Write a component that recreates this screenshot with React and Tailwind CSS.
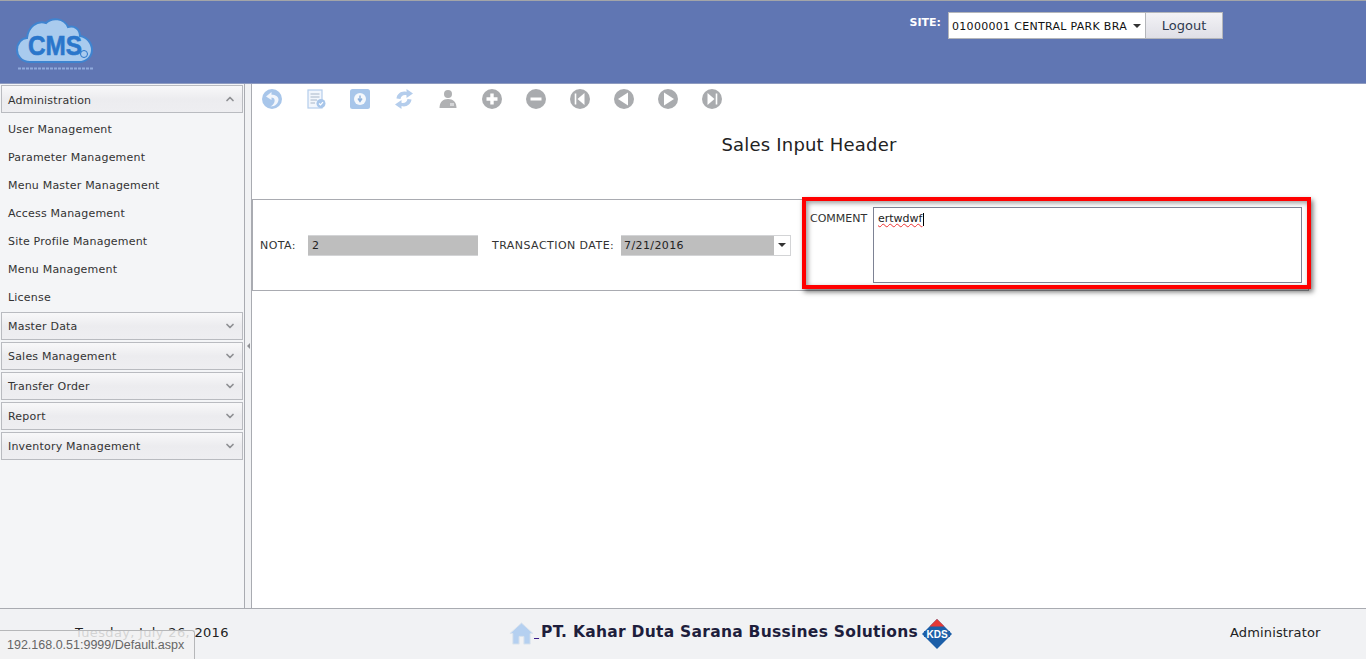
import React from 'react';
import { ChevronUp, ChevronDown } from 'lucide-react';

const font = "font-['DejaVu_Sans','Liberation_Sans',sans-serif]";

const adminItems = [
  'User Management',
  'Parameter Management',
  'Menu Master Management',
  'Access Management',
  'Site Profile Management',
  'Menu Management',
  'License',
];

const otherMenus = ['Master Data', 'Sales Management', 'Transfer Order', 'Report', 'Inventory Management'];

function Logo() {
  return (
    <svg width="80" height="56" viewBox="0 0 80 56">
      <path
        d="M15 46 C6 46 2 39 2 34 C2 27 7 22 12 22 C13 11 22 4 31 7 C37 1 49 2 53 11 C59 9 65 13 65 20 C72 21 77 27 77 34 C77 41 71 46 64 46 Z"
        fill="#a9cbee"
        stroke="#3f84d0"
        strokeWidth="2"
      />
      <text x="13" y="39" fontFamily="'Liberation Sans', sans-serif" fontWeight="700" fontSize="27" fill="#2a76cb" stroke="#2a76cb" strokeWidth="0.6" textLength="54" lengthAdjust="spacingAndGlyphs">CMS</text>
      <circle cx="69" cy="38" r="3.5" fill="none" stroke="#2a76cb" strokeWidth="1" />
      <path d="M3 52.5 H78" stroke="#8fa9dc" strokeWidth="2" strokeDasharray="3 1" />
    </svg>
  );
}

function ToolIcon({ children }) {
  return (
    <svg width="22" height="22" viewBox="0 0 22 22" className="shrink-0">
      {children}
    </svg>
  );
}

function RoundIcon({ children }) {
  return (
    <ToolIcon>
      <circle cx="11" cy="11" r="10" fill="#a9abae" />
      {children}
    </ToolIcon>
  );
}

function Toolbar() {
  return (
    <div className="flex h-[30px] items-center gap-[22px] pl-[9px]">
      <ToolIcon>
        <circle cx="11" cy="11" r="10" fill="#a8c6ea" />
        <path d="M10.5 4 L5 8.5 L10.5 12 L10.5 9.5 C13.5 9.5 14.5 12.5 13 15 C12.3 16.5 11 17.5 9.5 18.5 C14.5 18.5 17.5 15 17.5 11.5 C17.5 8.5 14.5 6.8 10.5 6.8 Z" fill="#f2f6fc" />
      </ToolIcon>
      <ToolIcon>
        <rect x="3" y="2" width="14" height="18" fill="#f2f6fc" stroke="#b4cdec" strokeWidth="1.2" />
        <path d="M5.5 6 H14.5 M5.5 9 H14.5 M5.5 12 H12 M5.5 15 H10" stroke="#a8b6c8" strokeWidth="1.2" />
        <circle cx="16" cy="15.5" r="4.5" fill="#a8c6ea" />
        <path d="M14 15.5 L15.5 17 L18 14.2" fill="none" stroke="#fff" strokeWidth="1.2" />
      </ToolIcon>
      <ToolIcon>
        <rect x="1" y="1" width="20" height="20" rx="2.5" fill="#a8c6ea" />
        <circle cx="11" cy="11" r="6" fill="#f5f8fc" />
        <path d="M11 7.5 V12 M9 10.5 L11 13.5 L13 10.5" fill="none" stroke="#8fb2dc" strokeWidth="1.4" />
      </ToolIcon>
      <ToolIcon>
        <path d="M3.5 10.5 C4 5.5 9 2.5 13.5 4 L13.5 1 L20 5.5 L13.5 10 L13.5 7.2 C10.5 6.5 8 8 7.5 11 Z" fill="#b4cdec" />
        <path d="M18.5 11.5 C18 16.5 13 19.5 8.5 18 L8.5 21 L2 16.5 L8.5 12 L8.5 14.8 C11.5 15.5 14 14 14.5 11 Z" fill="#b4cdec" />
      </ToolIcon>
      <ToolIcon>
        <circle cx="11" cy="6" r="4" fill="#b0b1b3" />
        <path d="M2.5 20 C2.5 14 6 11 11 11 C16 11 19.5 14 19.5 20 Z" fill="#b0b1b3" />
        <rect x="13" y="15" width="4" height="3" fill="#d6d7d9" />
      </ToolIcon>
      <RoundIcon>
        <path d="M11 5.5 V16.5 M5.5 11 H16.5" stroke="#fff" strokeWidth="3.4" />
      </RoundIcon>
      <RoundIcon>
        <path d="M5.5 11 H16.5" stroke="#fff" strokeWidth="3" />
      </RoundIcon>
      <RoundIcon>
        <path d="M6.5 5.5 V16.5" stroke="#fff" strokeWidth="1.6" />
        <path d="M15.5 5 V17 L8.5 11 Z" fill="#fff" />
      </RoundIcon>
      <RoundIcon>
        <path d="M15 4.5 V17.5 L5 11 Z" fill="#fff" />
      </RoundIcon>
      <RoundIcon>
        <path d="M7 4.5 V17.5 L17 11 Z" fill="#fff" />
      </RoundIcon>
      <RoundIcon>
        <path d="M15.5 5.5 V16.5" stroke="#fff" strokeWidth="1.6" />
        <path d="M6.5 5 V17 L13.5 11 Z" fill="#fff" />
      </RoundIcon>
    </div>
  );
}

function MenuHeader({ label, open }) {
  return (
    <div className="flex h-7 items-center justify-between border border-[#b9bbc0] bg-gradient-to-b from-[#f8f8f9] via-[#ececef] to-[#eeeef1] pl-[6px] pr-[6px] text-[11px] tracking-[0.2px] text-[#333]">
      <span className={open ? 'pt-[4px]' : 'pt-[2px]'}>{label}</span>
      {open ? (
        <ChevronUp className="h-[12px] w-[12px] text-[#8f9094]" strokeWidth={3.5} />
      ) : (
        <ChevronDown className="h-[12px] w-[12px] text-[#8f9094]" strokeWidth={3.5} />
      )}
    </div>
  );
}

export default function App() {
  return (
    <div className={`flex h-[659px] w-[1366px] flex-col overflow-hidden bg-white ${font}`}>
      {/* Header */}
      <header className="flex h-[84px] shrink-0 items-start justify-between border-t border-t-[#a3a5a8] border-b border-b-[#8e9bc0] bg-[#6076b3]">
        <div className="pl-[15px] pt-[15px]">
          <Logo />
        </div>
        <div className="mr-[143px] mt-[11px] flex items-start">
          <span className="mr-[7px] mt-[4px] text-[11px] font-bold leading-[13px] text-white">SITE:</span>
          <div className="flex h-[27px] w-[198px] items-center justify-between border border-[#b4b6ba] bg-white pl-[3px] pr-[4px] text-[11px] tracking-[0.3px] text-[#111]">
            <span className="pt-[3px]">01000001 CENTRAL PARK BRA</span>
            <span className="h-0 w-0 border-x-[4px] border-t-[4px] border-x-transparent border-t-[#333]" />
          </div>
          <div className="flex h-[27px] w-[77px] items-center justify-center border border-l-0 border-[#b4b6ba] bg-gradient-to-b from-[#f3f3f6] to-[#dfdfe6] text-[13px] text-[#2f3a4f]">
            Logout
          </div>
        </div>
      </header>

      <div className="flex min-h-0 flex-1">
        {/* Sidebar */}
        <aside className="w-[244px] shrink-0 bg-[#f4f5f7] pl-px pr-px pt-px">
          <MenuHeader label="Administration" open />
          <ul className="mt-[3px] text-[11px] tracking-[0.2px] text-[#333]">
            {adminItems.map((item) => (
              <li key={item} className="flex h-7 items-center pl-[7px]">
                {item}
              </li>
            ))}
          </ul>
          <div className="flex flex-col gap-[2px]">
            {otherMenus.map((m) => (
              <MenuHeader key={m} label={m} />
            ))}
          </div>
        </aside>

        {/* Splitter */}
        <div className="flex w-2 shrink-0 items-center justify-center border-x border-[#a9abb1] bg-[#f1f2f4] pb-[1px]">
          <span className="h-0 w-0 border-y-[3px] border-r-[3px] border-y-transparent border-r-[#8f9094]" />
        </div>

        {/* Content */}
        <main className="relative min-w-0 flex-1 bg-white text-[#333]">
          <Toolbar />
          <h1 className="mt-[21px] w-[1114px] text-center text-[18px] font-normal leading-5 tracking-[0.2px] text-[#222]">Sales Input Header</h1>

          <div className="relative mt-[44px] flex h-[92px] w-[1057px] items-center border border-[#a9abb1] pl-[7px] text-[11px]">
            <span className="w-[48px] pt-[2px] tracking-[0.4px]">NOTA:</span>
            <div className="flex h-[21px] w-[170px] items-center border-y border-[#d3d4d6] bg-[#bebebe] pl-[4px] pt-[2px] tracking-[0.4px] text-[#222]">2</div>
            <span className="ml-[14px] w-[129px] pt-[2px] tracking-[0.45px]">TRANSACTION DATE:</span>
            <div className="flex h-[21px] w-[170px] items-center justify-between border border-l-0 border-[#d3d4d6] bg-[#bebebe] pl-[3px] tracking-[0.4px] text-[#222]">
              <span className="pt-[2px]">7/21/2016</span>
              <span className="flex h-full w-4 items-center justify-center bg-white">
                <span className="h-0 w-0 border-x-[4px] border-t-[4px] border-x-transparent border-t-[#333]" />
              </span>
            </div>

            {/* red highlight around the comment cell */}
            <div className="absolute left-[549px] top-[-3px] flex h-[92px] w-[509px] items-start border-4 border-[#ff0000] bg-white pl-[4px] pt-[6px] shadow-[2px_3px_5px_rgba(0,0,0,0.55),inset_2px_2px_5px_rgba(0,0,0,0.4)]">
              <span className="w-[63px] pt-[4px]">COMMENT</span>
              <div className="h-[76px] w-[429px] border border-[#7d8294] bg-white pl-[4px] pt-[3px] text-[#222]">
                <span className="underline decoration-wavy decoration-[#e33] decoration-1">ertwdwf</span>
                <span className="ml-px inline-block h-[13px] w-px bg-black align-middle" />
              </div>
            </div>
          </div>
        </main>
      </div>

      {/* Footer */}
      <footer className="relative flex h-[51px] shrink-0 items-center border-t border-[#a9abb1] bg-[#f1f2f4] text-[#222]">
        <span className="mb-[3px] ml-[75px] w-[434px] text-[13px] tracking-[0.33px]">Tuesday, July 26, 2016</span>
        <svg width="25" height="25" viewBox="0 0 26 26" className="mb-[1px] shrink-0">
          <path d="M13 2 L25 13 H22 V24 H15.5 V16 H10.5 V24 H4 V13 H1 Z" fill="#b5d0f0" stroke="#dbe3ec" strokeWidth="1" />
        </svg>
        <span className="mt-[2px] w-[7px] text-[8px] text-[#3a1a8a] underline">&nbsp;&nbsp;</span>
        <span className="mb-[2px] text-[15.5px] font-bold tracking-[0.27px] text-[#1e1e3c]">PT. Kahar Duta Sarana Bussines Solutions</span>
        <svg width="32" height="32" viewBox="0 0 32 32" className="ml-[3px] shrink-0">
          <path d="M16 1 L31 16 L16 31 L1 16 Z" fill="#1c5fa8" />
          <path d="M16 1 L23.5 8.5 H8.5 Z" fill="#e53935" />
          <path d="M3 13 H29 V19 H3 Z" fill="#1c5fa8" />
          <text x="16" y="19.5" textAnchor="middle" fontFamily="'Liberation Sans', sans-serif" fontWeight="700" fontSize="10" fill="#fff">KDS</text>
        </svg>
        <span className="absolute left-[1230px] top-[14px] text-[13px] tracking-[0.15px]">Administrator</span>

        {/* browser status bubble */}
        <div className="absolute bottom-0 left-0 flex h-[29px] w-[195px] items-center rounded-tr-[3px] border-r border-t border-[#b6b7b9] bg-[#f2f2f2]/85 pl-[7px] font-['Liberation_Sans',sans-serif] text-[12.5px] text-[#666]">
          192.168.0.51:9999/Default.aspx
        </div>
      </footer>
    </div>
  );
}
